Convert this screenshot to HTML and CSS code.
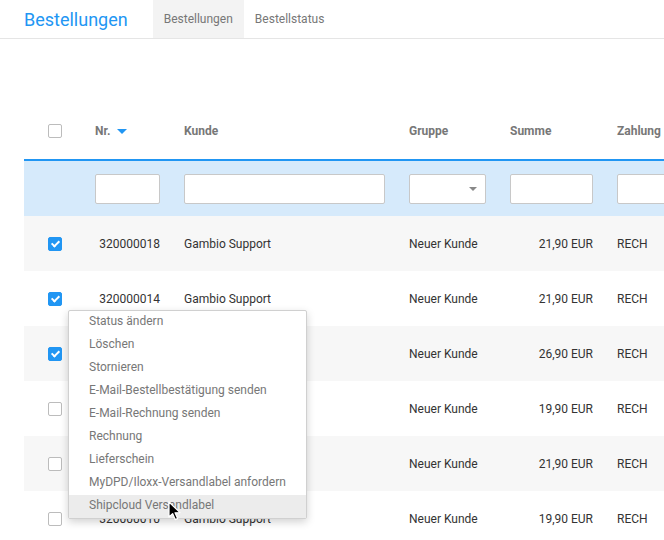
FILE: index.html
```html
<!DOCTYPE html>
<html lang="de">
<head>
<meta charset="utf-8">
<title>Bestellungen</title>
<link rel="stylesheet" href="styles.css">
</head>
<body>
<header class="topbar">
  <h1 class="title">Bestellungen</h1>
  <nav class="tabs">
    <a class="tab active">Bestellungen</a>
    <a class="tab">Bestellstatus</a>
  </nav>
</header>
<main class="content">
  <table class="orders">
    <colgroup>
      <col class="c-check"><col class="c-nr"><col class="c-kunde"><col class="c-gruppe"><col class="c-summe"><col class="c-zahlung">
    </colgroup>
    <thead>
      <tr class="head-row">
        <th class="cell-check"><span class="cb"></span></th>
        <th>Nr. <span class="sort"></span></th>
        <th>Kunde</th>
        <th>Gruppe</th>
        <th>Summe</th>
        <th>Zahlung</th>
      </tr>
      <tr class="filter-row">
        <td class="cell-check"></td>
        <td><span class="inp"></span></td>
        <td><span class="inp"></span></td>
        <td><span class="inp select"><span class="caret"></span></span></td>
        <td><span class="inp"></span></td>
        <td><span class="inp"></span></td>
      </tr>
    </thead>
    <tbody>
      <tr class="odd"><td class="cell-check"><span class="cb on"></span></td><td class="num">320000018</td><td>Gambio Support</td><td>Neuer Kunde</td><td class="num">21,90 EUR</td><td>RECH</td></tr>
      <tr><td class="cell-check"><span class="cb on"></span></td><td class="num">320000014</td><td>Gambio Support</td><td>Neuer Kunde</td><td class="num">21,90 EUR</td><td>RECH</td></tr>
      <tr class="odd"><td class="cell-check"><span class="cb on"></span></td><td class="num">320000013</td><td>Gambio Support</td><td>Neuer Kunde</td><td class="num">26,90 EUR</td><td>RECH</td></tr>
      <tr><td class="cell-check"><span class="cb"></span></td><td class="num">320000012</td><td>Gambio Support</td><td>Neuer Kunde</td><td class="num">19,90 EUR</td><td>RECH</td></tr>
      <tr class="odd"><td class="cell-check"><span class="cb"></span></td><td class="num">320000011</td><td>Gambio Support</td><td>Neuer Kunde</td><td class="num">21,90 EUR</td><td>RECH</td></tr>
      <tr><td class="cell-check"><span class="cb"></span></td><td class="num">320000010</td><td>Gambio Support</td><td>Neuer Kunde</td><td class="num">19,90 EUR</td><td>RECH</td></tr>
    </tbody>
  </table>
  <ul class="menu">
    <li>Status ändern</li>
    <li>Löschen</li>
    <li>Stornieren</li>
    <li>E-Mail-Bestellbestätigung senden</li>
    <li>E-Mail-Rechnung senden</li>
    <li>Rechnung</li>
    <li>Lieferschein</li>
    <li>MyDPD/Iloxx-Versandlabel anfordern</li>
    <li class="hover">Shipcloud Versandlabel</li>
  </ul>
  <svg class="cursor" width="13" height="20" viewBox="0 0 13 20"><path d="M1 1 L1 16 L4.6 12.6 L7.2 18.6 L9.6 17.6 L7 11.8 L12 11.6 Z" fill="#000" stroke="#fff" stroke-width="1.2" stroke-linejoin="round"/></svg>
</main>
</body>
</html>
```
FILE: styles.css
```css
* { box-sizing: border-box; }
html, body { margin: 0; padding: 0; overflow: hidden; background: #fff; }
body { font-family: Roboto, "Open Sans", Arial, sans-serif; font-size: 12px; color: #333; width: 664px; height: 540px; }

.topbar { display: flex; align-items: stretch; height: 39px; border-bottom: 1px solid #e5e5e5; padding-left: 24px; }
.title { margin: 0; font-size: 18px; font-weight: 400; color: #2196f3; line-height: 39px; margin-right: 25px; }
.tabs { display: flex; }
.tab { display: block; padding: 0 11px; line-height: 38px; color: #777; font-size: 12px; }
.tab.active { background: #f3f3f3; }

.content { position: relative; padding-top: 63px; padding-left: 24px; }
.orders { border-collapse: collapse; table-layout: fixed; width: 740px; }
.c-check { width: 59px; } .c-nr { width: 89px; } .c-kunde { width: 225px; } .c-gruppe { width: 101px; } .c-summe { width: 107px; } .c-zahlung { width: 159px; }
.orders th, .orders td { padding: 0 12px; text-align: left; white-space: nowrap; }
.orders th { height: 58px; font-weight: 700; color: #777; }
.orders .cell-check { padding-left: 24px; padding-right: 0; }
.sort { display: inline-block; width: 0; height: 0; border-left: 5px solid transparent; border-right: 5px solid transparent; border-top: 5px solid #2196f3; vertical-align: middle; margin-left: 4px; }

.filter-row td { height: 56px; background: #d6eafb; border-top: 2px solid #2196f3; }
.inp { display: block; height: 30px; background: #fff; border: 1px solid #c8c8c8; border-radius: 2px; position: relative; }
.caret { position: absolute; right: 8px; top: 12px; width: 0; height: 0; border-left: 4px solid transparent; border-right: 4px solid transparent; border-top: 4px solid #888; }

.orders tbody td { height: 55px; }
.orders tbody tr.odd td { background: #f7f7f7; }
.num { text-align: right !important; }

.cb { display: block; width: 14px; height: 14px; border: 1px solid #bcbcbc; border-radius: 2px; background: #fff; position: relative; }
.cb.on { background: #2196f3; border-color: #2196f3; }
.cb.on::after { content: ""; position: absolute; left: 4px; top: 1.5px; width: 3px; height: 6px; border: solid #fff; border-width: 0 2px 2px 0; transform: rotate(45deg); }

.menu { position: absolute; left: 68px; top: 271px; width: 239px; margin: 0; padding: 0; list-style: none; background: #fff; border: 1px solid #d0d0d0; border-radius: 2px; box-shadow: 0 3px 8px rgba(0,0,0,0.18); }
.menu li { height: 23px; line-height: 21px; padding-left: 20px; color: #777; font-size: 12px; white-space: nowrap; }
.menu li.hover { background: #ececec; }
.cursor { position: absolute; left: 168px; top: 462px; }
```
